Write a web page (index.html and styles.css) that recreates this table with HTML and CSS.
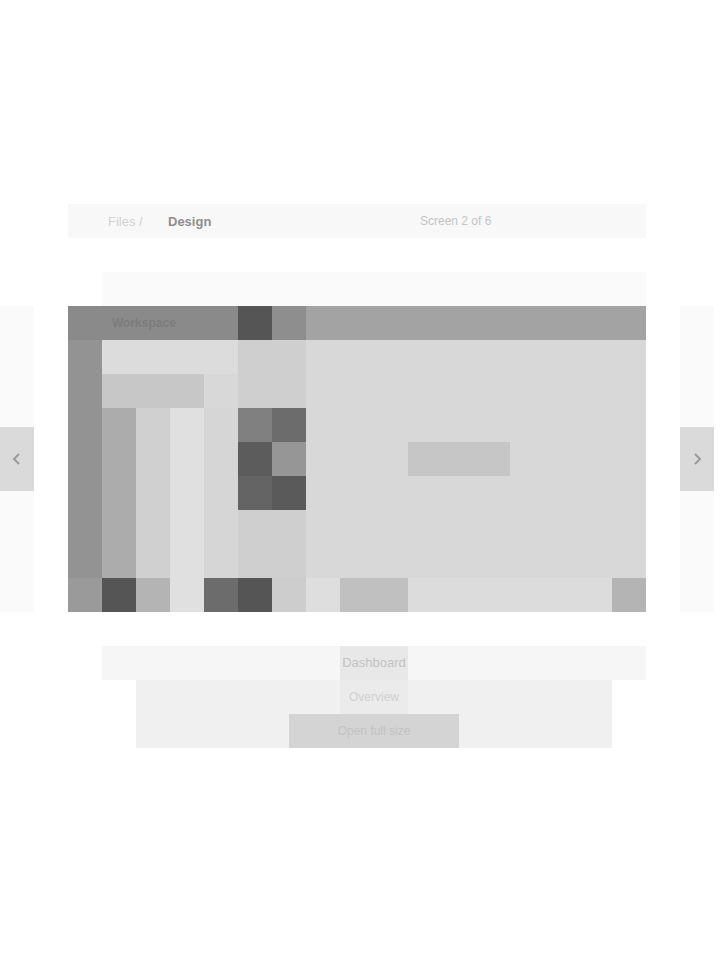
FILE: index.html
```html
<!DOCTYPE html>
<html lang="en">
<head>
<meta charset="utf-8">
<title>Gallery preview</title>
<link rel="stylesheet" href="styles.css">
</head>
<body>
<div class="page">
  <div class="toolbar">
    <span class="crumb">Files /</span>
    <span class="crumb-current">Design</span>
    <span class="counter">Screen 2 of 6</span>
  </div>
  <div class="subline"></div>

  <button class="side-nav prev" aria-label="Previous">
    <span class="nav-btn">
      <svg width="14" height="14" viewBox="0 0 14 14"><path d="M9 2 L4 7 L9 12" fill="none" stroke="#9a9a9a" stroke-width="2"/></svg>
    </span>
  </button>

  <div class="shot">
    <div class="hdr">
      <div class="hdr-a"><span>Workspace</span></div>
      <div class="hdr-logo"></div>
      <div class="hdr-b"></div>
      <div class="hdr-c"></div>
    </div>
    <div class="rail"></div>
    <div class="pane-top"></div>
    <div class="search"></div>
    <div class="search-end"></div>
    <div class="list-ico"></div>
    <div class="list-a"></div>
    <div class="list-b"></div>
    <div class="list-c"></div>
    <div class="mid-top"></div>
    <div class="tiles">
      <div class="t1"></div><div class="t2"></div>
      <div class="t3"></div><div class="t4"></div>
      <div class="t5"></div><div class="t6"></div>
    </div>
    <div class="mid-bot"></div>
    <div class="main"><div class="main-chip"></div></div>
    <div class="status">
      <div class="s s1"></div>
      <div class="s s2"></div>
      <div class="s s3"></div>
      <div class="s s4"></div>
      <div class="s s5"></div>
      <div class="s s6"></div>
      <div class="s s7"></div>
      <div class="s s8"></div>
      <div class="s s9"></div>
      <div class="s s10"></div>
      <div class="s s11"></div>
    </div>
  </div>

  <button class="side-nav next" aria-label="Next">
    <span class="nav-btn">
      <svg width="14" height="14" viewBox="0 0 14 14"><path d="M5 2 L10 7 L5 12" fill="none" stroke="#9a9a9a" stroke-width="2"/></svg>
    </span>
  </button>

  <div class="caption">
    <div class="cap-title"><span>Dashboard</span></div>
    <div class="cap-body">
      <span class="cap-text">Overview</span>
      <span class="cap-btn">Open full size</span>
    </div>
  </div>
</div>
</body>
</html>
```

FILE: styles.css
```css
* { box-sizing: border-box; }
html, body { margin: 0; padding: 0; background: #ffffff; }
body { font-family: "Liberation Sans", Arial, sans-serif; }

.page {
  display: grid;
  grid-template-columns: 34px 34px 578px 34px 34px;
  grid-template-rows: 34px 34px 34px 306px 34px 102px;
  padding-top: 204px;
  width: 720px;
}

/* top toolbar */
.toolbar {
  grid-column: 3;
  grid-row: 1;
  background: #f8f8f8;
  display: flex;
  align-items: center;
  font-size: 13px;
  padding-left: 40px;
}
.crumb { color: #d2d2d2; width: 60px; }
.crumb-current { color: #8e8e8e; font-weight: bold; width: 48px; }
.counter { color: #c4c4c4; margin-left: 204px; font-size: 12px; }

.subline {
  grid-column: 3;
  grid-row: 3;
  margin-left: 34px;
  background: #fafafa;
}

/* side navigation */
.side-nav {
  grid-row: 4;
  border: 0;
  padding: 0;
  margin: 0;
  background: #fafafa;
  display: flex;
  align-items: center;
  justify-content: center;
}
.side-nav.prev { grid-column: 1; }
.side-nav.next { grid-column: 5; }
.nav-btn {
  width: 34px;
  height: 64px;
  background: #dadada;
  display: flex;
  align-items: center;
  justify-content: center;
}

/* screenshot mock */
.shot {
  grid-column: 3;
  grid-row: 4;
  display: grid;
  grid-template-columns: repeat(17, 34px);
  grid-template-rows: repeat(9, 34px);
  background: #d8d8d8;
}
.hdr { grid-column: 1 / -1; grid-row: 1; display: flex; }
.hdr-a { width: 170px; background: #8a8a8a; display: flex; align-items: center; padding-left: 44px; }
.hdr-a span { color: #7c7c7c; font-size: 12px; font-weight: bold; }
.hdr-logo { width: 34px; background: #555555; }
.hdr-b { width: 34px; background: #8e8e8e; }
.hdr-c { flex: 1; background: #a3a3a3; }

.rail { grid-column: 1; grid-row: 2 / 9; background: #939393; }
.pane-top { grid-column: 2 / 6; grid-row: 2; background: #dcdcdc; }
.search { grid-column: 2 / 5; grid-row: 3; background: #c7c7c7; }
.search-end { grid-column: 5; grid-row: 3; background: #d8d8d8; }
.list-ico { grid-column: 2; grid-row: 4 / 9; background: #acacac; }
.list-a { grid-column: 3; grid-row: 4 / 9; background: #d0d0d0; }
.list-b { grid-column: 4; grid-row: 4 / 9; background: #e0e0e0; }
.list-c { grid-column: 5; grid-row: 4 / 9; background: #d6d6d6; }

.mid-top { grid-column: 6 / 8; grid-row: 2 / 4; background: #cfcfcf; }
.mid-bot { grid-column: 6 / 8; grid-row: 7 / 9; background: #cfcfcf; }
.tiles {
  grid-column: 6 / 8;
  grid-row: 4 / 7;
  display: grid;
  grid-template-columns: 34px 34px;
  grid-template-rows: 34px 34px 34px;
}
.t1 { background: #808080; }
.t2 { background: #6c6c6c; }
.t3 { background: #5c5c5c; }
.t4 { background: #969696; }
.t5 { background: #646464; }
.t6 { background: #5a5a5a; }

.main {
  grid-column: 8 / 18;
  grid-row: 2 / 9;
  background: #d8d8d8;
  padding: 102px 0 0 102px;
}
.main-chip { width: 102px; height: 34px; background: #c6c6c6; }

.status { grid-column: 1 / -1; grid-row: 9; display: flex; }
.s { width: 34px; }
.s1 { background: #9a9a9a; }
.s2 { background: #555555; }
.s3 { background: #b4b4b4; }
.s4 { background: #e0e0e0; }
.s5 { background: #6c6c6c; }
.s6 { background: #555555; }
.s7 { background: #cdcdcd; }
.s8 { background: #dedede; }
.s9 { width: 68px; background: #c0c0c0; }
.s10 { width: 204px; background: #dcdcdc; }
.s11 { background: #b4b4b4; }

/* caption */
.caption {
  grid-column: 3;
  grid-row: 6;
  display: flex;
  flex-direction: column;
}
.cap-title {
  height: 34px;
  margin-left: 34px;
  background: #f6f6f6;
  display: flex;
  align-items: center;
  justify-content: center;
  font-size: 13px;
  color: #c2c2c2;
}
.cap-title span { width: 68px; text-align: center; background: #e8e8e8; line-height: 34px; }
.cap-body {
  height: 68px;
  margin: 0 34px 0 68px;
  background: #f0f0f0;
  display: flex;
  flex-direction: column;
  align-items: center;
}
.cap-text {
  height: 34px;
  line-height: 34px;
  width: 68px;
  text-align: center;
  font-size: 12px;
  color: #d0d0d0;
  background: #ebebeb;
}
.cap-btn {
  height: 34px;
  line-height: 34px;
  width: 170px;
  text-align: center;
  background: #d4d4d4;
  color: #c2c2c2;
  font-size: 12px;
}
```
